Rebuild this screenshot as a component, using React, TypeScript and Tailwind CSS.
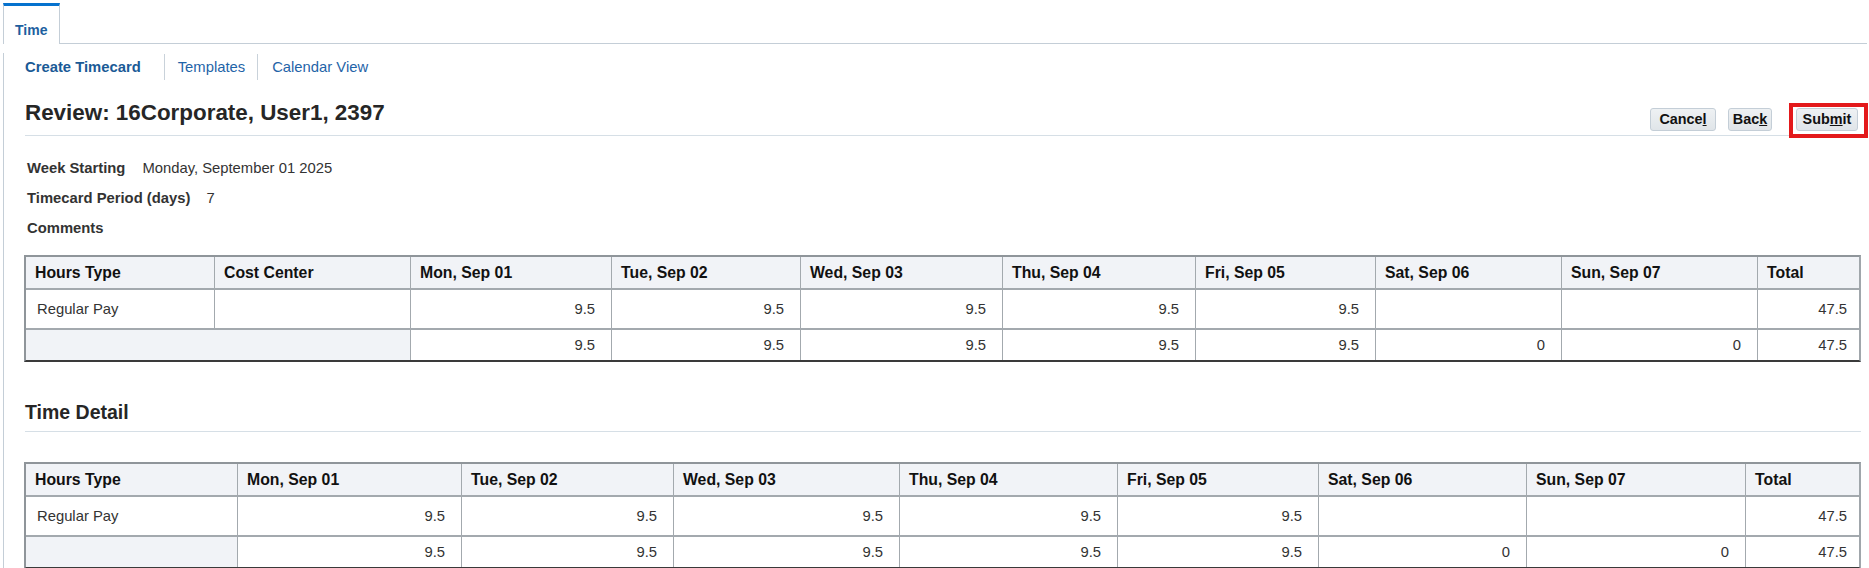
import React from "react";

type Cell = { text?: string; num?: boolean; label?: boolean; span2?: boolean };

const days = [
  "Mon, Sep 01",
  "Tue, Sep 02",
  "Wed, Sep 03",
  "Thu, Sep 04",
  "Fri, Sep 05",
  "Sat, Sep 06",
  "Sun, Sep 07",
];

function HeaderCell({ text, last }: { text: string; last?: boolean }) {
  return (
    <div
      className={
        "h-[33px] flex items-center pl-[9px] bg-[#f1f3f7] border-b-2 border-[#a3a9ae] text-[15.8px] font-bold text-[#111] whitespace-nowrap " +
        (last ? "" : "border-r")
      }
    >
      {text}
    </div>
  );
}

function BodyCell({
  cell,
  last,
  lastRow,
}: {
  cell: Cell;
  last?: boolean;
  lastRow?: boolean;
}) {
  const base =
    "flex items-center text-[14.8px] text-[#333] whitespace-nowrap border-[#a3a9ae] " +
    (lastRow ? "h-[30px] " : "h-[40px] border-b-2 ") +
    (last ? "" : "border-r ") +
    (cell.span2 ? "col-span-2 " : "") +
    (cell.label ? "bg-[#f1f3f7] " : "bg-white ") +
    (cell.num ? "justify-end " + (last ? "pr-[12px] " : "pr-[16px] ") : "pl-[11px] ");
  return <div className={base}>{cell.text}</div>;
}

function TableBody({
  header,
  rows,
}: {
  header: string[];
  rows: Cell[][];
}) {
  return (
    <>
      {header.map((h, i) => (
        <HeaderCell key={"h" + i} text={h} last={i === header.length - 1} />
      ))}
      {rows.map((r, ri) =>
        r.map((c, ci) => (
          <BodyCell
            key={ri + "-" + ci}
            cell={c}
            last={ci === r.length - 1}
            lastRow={ri === rows.length - 1}
          />
        ))
      )}
    </>
  );
}

const n = (t: string): Cell => ({ text: t, num: true });

export default function App() {
  const topHeader = ["Hours Type", "Cost Center", ...days, "Total"];
  const topRows: Cell[][] = [
    [
      { text: "Regular Pay" },
      { text: "" },
      n("9.5"),
      n("9.5"),
      n("9.5"),
      n("9.5"),
      n("9.5"),
      n(""),
      n(""),
      n("47.5"),
    ],
    [
      { text: "", label: true, span2: true },
      n("9.5"),
      n("9.5"),
      n("9.5"),
      n("9.5"),
      n("9.5"),
      n("0"),
      n("0"),
      n("47.5"),
    ],
  ];
  const botHeader = ["Hours Type", ...days, "Total"];
  const botRows: Cell[][] = [
    [
      { text: "Regular Pay" },
      n("9.5"),
      n("9.5"),
      n("9.5"),
      n("9.5"),
      n("9.5"),
      n(""),
      n(""),
      n("47.5"),
    ],
    [
      { text: "", label: true },
      n("9.5"),
      n("9.5"),
      n("9.5"),
      n("9.5"),
      n("9.5"),
      n("0"),
      n("0"),
      n("47.5"),
    ],
  ];

  return (
    <div className="w-full h-[568px] overflow-hidden bg-white pt-[3px] pl-[3px] font-['Liberation_Sans',Arial,sans-serif]">
      {/* Tab strip */}
      <div className="flex h-[41px]">
        <div className="w-[57px] h-[41px] border-t-[3px] border-t-[#0572ce] border-l border-r border-[#c4ced7] pl-[11px] pt-[12px]">
          <span className="text-[14px] leading-[16px] font-bold text-[#1d5f9f]">Time</span>
        </div>
        <div className="flex-1 h-[41px] border-b border-[#c4ced7] mr-[2px]" />
      </div>

      {/* Panel */}
      <div className="border-l border-[#c4ced7] pl-[21px] pr-[8px] h-[524px]">
        {/* Sub nav */}
        <div className="flex items-center h-[28px] mt-[9px] text-[14.8px]">
          <span className="font-bold text-[#1a5a96]">Create Timecard</span>
          <span className="ml-[23px] w-px h-[26px] bg-[#c9d2da]" />
          <span className="ml-[13px] text-[#1f64a8]">Templates</span>
          <span className="ml-[12px] w-px h-[26px] bg-[#c9d2da]" />
          <span className="ml-[14px] text-[#1f64a8]">Calendar View</span>
        </div>

        {/* Title row */}
        <div className="flex justify-between items-end h-[55px] border-b border-[#d6dfe6]">
          <div className="text-[22.4px] leading-[26px] font-bold text-[#262626] mb-[9px]">
            Review: 16Corporate, User1, 2397
          </div>
          <div className="flex items-center mb-[4px] mr-[3px]">
            <button className="w-[66px] h-[23px] flex items-center justify-center rounded-[3px] border border-[#c4ced7] bg-gradient-to-b from-[#eef1f3] to-[#e0e5e9] text-[14.4px] font-bold text-[#111]">
              Cance<span className="underline">l</span>
            </button>
            <button className="ml-[12px] w-[44px] h-[23px] flex items-center justify-center rounded-[3px] border border-[#c4ced7] bg-gradient-to-b from-[#eef1f3] to-[#e0e5e9] text-[14.4px] font-bold text-[#111]">
              Bac<span className="underline">k</span>
            </button>
            <div className="relative ml-[24px]">
              <button className="w-[62px] h-[23px] flex items-center justify-center rounded-[3px] border border-[#c4ced7] bg-gradient-to-b from-[#eef1f3] to-[#e0e5e9] text-[14.4px] font-bold text-[#111]">
                Sub<span className="underline">m</span>it
              </button>
              <div className="absolute -left-[7px] -right-[10px] -top-[5px] -bottom-[7px] border-[4px] border-[#e3191b] pointer-events-none" />
            </div>
          </div>
        </div>

        {/* Info */}
        <div className="mt-[17px] pl-[2px] text-[14.8px] text-[#333]">
          <div className="flex items-center h-[30px] gap-[17px]">
            <span className="font-bold">Week Starting</span>
            <span>Monday, September 01 2025</span>
          </div>
          <div className="flex items-center h-[30px] gap-[16px]">
            <span className="font-bold">Timecard Period (days)</span>
            <span>7</span>
          </div>
          <div className="flex items-center h-[30px]">
            <span className="font-bold">Comments</span>
          </div>
        </div>

        {/* Top table */}
        <div className="mt-[12px] -ml-px grid grid-cols-[189px_196px_201px_189px_202px_193px_180px_186px_196px_1fr] border-2 border-[#8f959a] border-b-[#3a3a3a] border-r-[#a0a6ab]">
          <TableBody header={topHeader} rows={topRows} />
        </div>

        {/* Time Detail */}
        <div className="mt-[38px] pb-[7px] border-b border-[#d6dfe6]">
          <div className="text-[19.5px] leading-[24px] font-bold text-[#262626]">Time Detail</div>
        </div>

        {/* Bottom table */}
        <div className="mt-[30px] -ml-px grid grid-cols-[212px_224px_212px_226px_218px_201px_208px_219px_1fr] border-2 border-[#8f959a] border-b-[#3a3a3a] border-r-[#a0a6ab]">
          <TableBody header={botHeader} rows={botRows} />
        </div>
      </div>
    </div>
  );
}
